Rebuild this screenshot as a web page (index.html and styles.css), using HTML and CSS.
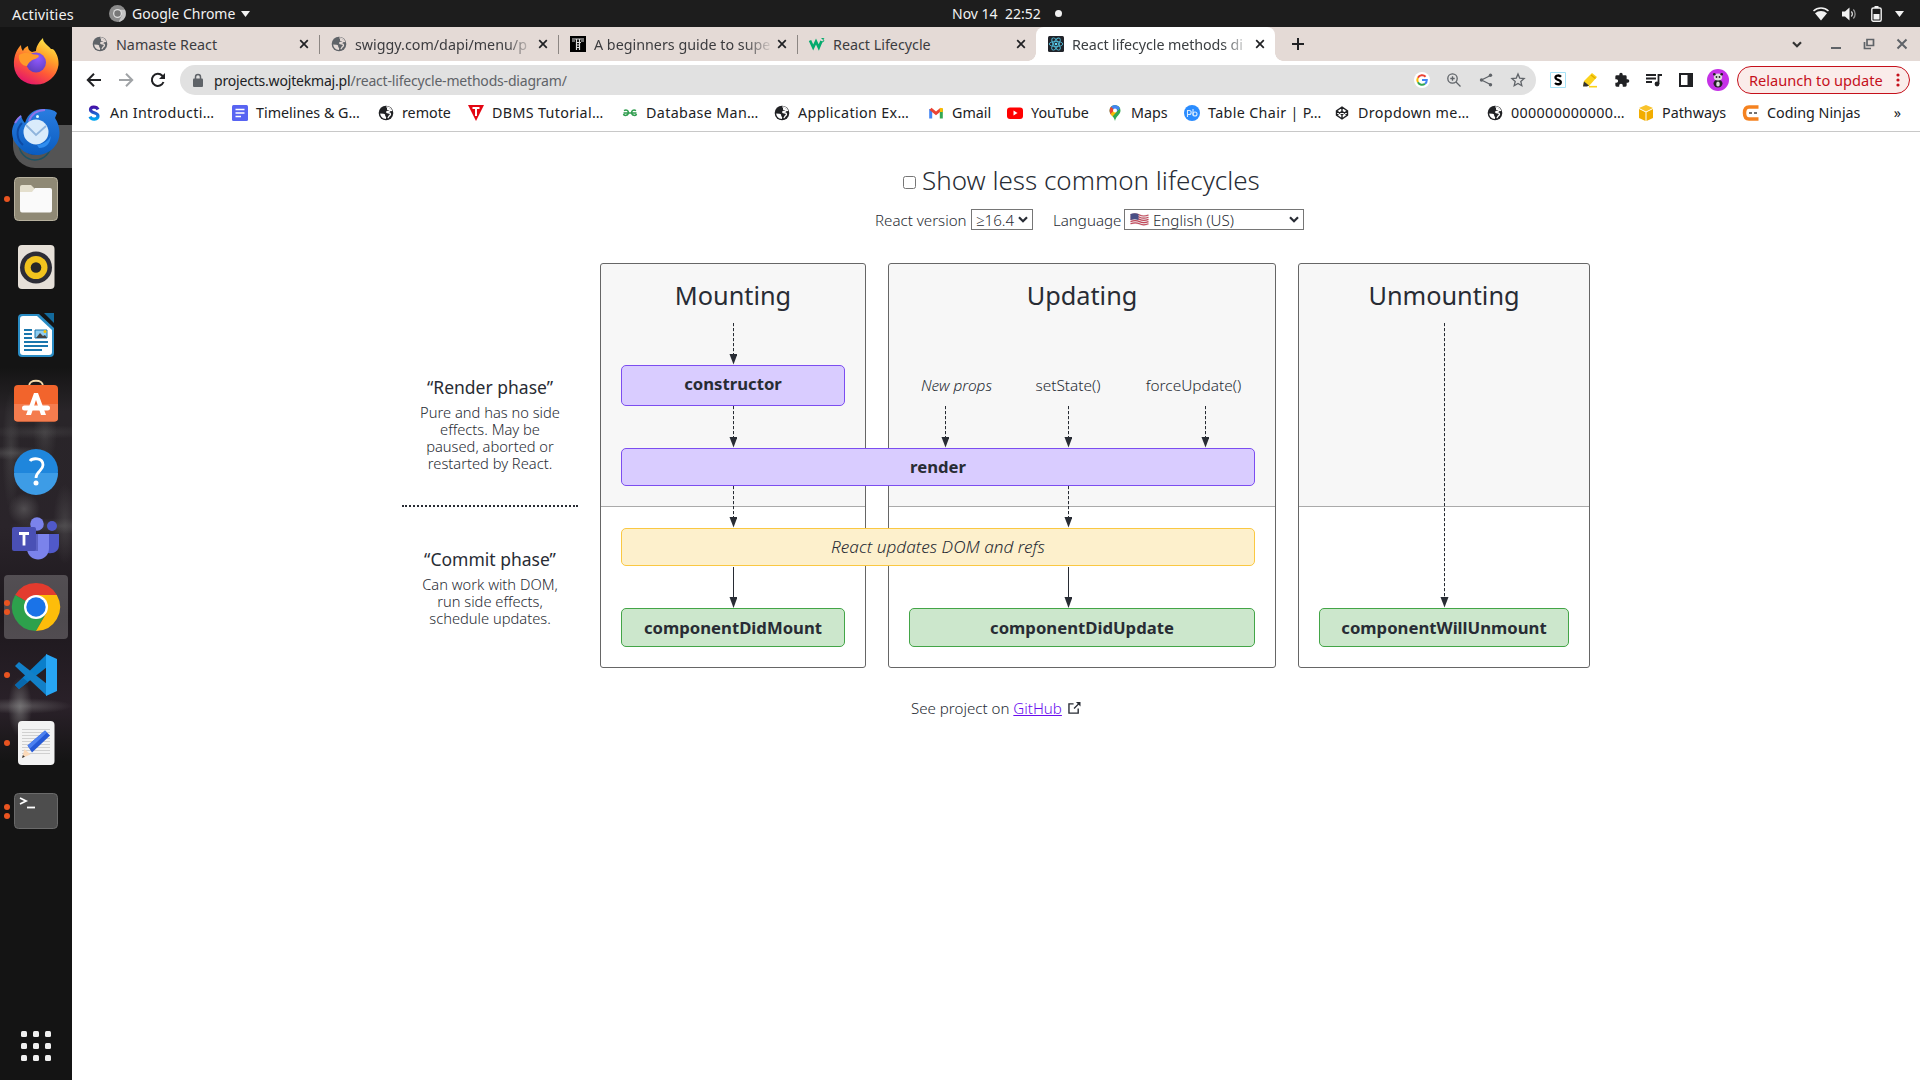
FILE: index.html
```html
<!DOCTYPE html>
<html lang="en">
<head>
<meta charset="utf-8">
<title>React lifecycle methods diagram</title>
<link rel="stylesheet" href="styles.css">
</head>
<body>
<svg class="defs" width="0" height="0">
  <defs>
    <linearGradient id="fox" x1=".8" y1="0" x2=".3" y2="1"><stop offset="0" stop-color="#fff44f"/><stop offset=".35" stop-color="#ffa52a"/><stop offset=".65" stop-color="#ff5a36"/><stop offset="1" stop-color="#e3156c"/></linearGradient>
    <radialGradient id="foxglobe" cx=".6" cy=".3" r=".8"><stop offset="0" stop-color="#9059ff"/><stop offset="1" stop-color="#5b3bb5"/></radialGradient>
    <linearGradient id="bird" x1="0" y1="0" x2="0" y2="1"><stop offset="0" stop-color="#2a7de0"/><stop offset="1" stop-color="#0a5cc0"/></linearGradient>
    <linearGradient id="sgrad" x1="0" y1="0" x2="0" y2="1"><stop offset="0" stop-color="#4312a8"/><stop offset="1" stop-color="#00a5f0"/></linearGradient>
    <symbol id="globe" viewBox="0 0 16 16"><circle cx="8" cy="8" r="7.300" fill="currentColor"/><path d="M2.200 8.500l3.300.200c1.300.1 1.700.8 1.700 1.600v.900c.9.2 1 .8.9 1.600l-.200 1.200C4.700 13.900 2.300 11.500 2.200 8.500z" fill="var(--land,#fff)"/><path d="M8.300 1.900c2.500.1 4.300 1.500 5.200 3.500l-1.700.200c-.5.900-1.300 1-2.300.8-.8 0-1 .9-.3 1.200 1.200.3 3 .1 3.300 1.400.2 1.200-.8 1.500-1.500 2.200-.300.7-.4 1.300-1.300 1.700" fill="none" stroke="var(--land,#fff)" stroke-width="1.300"/><path d="M9 2.400c2 .3 3.200 1.200 4 2.500l-2 .7-2-.8z" fill="var(--land,#fff)"/></symbol>
    <symbol id="x" viewBox="0 0 10 10"><path d="M1.200 1.200l7.600 7.600M8.800 1.200L1.200 8.800" stroke="#202124" stroke-width="1.700" fill="none"/></symbol>
    <symbol id="chev" viewBox="0 0 10 7"><path d="M1 1.200l4 4 4-4" stroke="currentColor" stroke-width="2.200" fill="none"/></symbol>
    <symbol id="arrow" viewBox="0 0 8 42"><path d="M4.500 0v32" stroke="#282c34" stroke-dasharray="3.200 1.800"/><path d="M.5 31h8l-4 10.500z" fill="#282c34"/></symbol>
    <symbol id="arrow-solid" viewBox="0 0 8 42"><path d="M4.500 1v32" stroke="#282c34"/><path d="M.5 31h8l-4 11z" fill="#282c34"/></symbol>
  </defs>
</svg>

<header class="topbar">
  <span class="activities">Activities</span>
  <span class="app-menu">
    <svg width="17" height="17" viewBox="0 0 16 16"><circle cx="8" cy="8" r="8" fill="#8b8b8b"/><path d="M8 4.500h7a8 8 0 0 1-6 11.400l3-6z" fill="#c4c4c4"/><circle cx="8" cy="8" r="4.200" fill="#ddd"/><circle cx="8" cy="8" r="3" fill="#777"/></svg>
    Google Chrome
    <svg width="9" height="6" viewBox="0 0 9 6"><path d="M0 0h9L4.500 6z" fill="#f2f2f2"/></svg>
  </span>
  <span class="clock">Nov 14&nbsp; 22:52<i class="clock-dot"></i></span>
  <span class="tray">
    <svg width="16" height="14" viewBox="0 0 16 14"><path d="M.5 4a11 11 0 0 1 15 0" fill="none" stroke="#f2f2f2" stroke-width="1.500"/><path d="M2 6.200a9 9 0 0 1 12 0L8 13.500z" fill="#f2f2f2"/></svg>
    <svg width="16" height="14" viewBox="0 0 16 14"><path d="M0 4.500h3L7.500.500v13L3 9.500H0z" fill="#f2f2f2"/><path d="M9.300 4.500a3.500 3.500 0 0 1 0 5" fill="none" stroke="#ddd" stroke-width="1.300"/><path d="M11.300 2.500a6.500 6.500 0 0 1 0 9" fill="none" stroke="#999" stroke-width="1.300"/></svg>
    <svg width="11" height="16" viewBox="0 0 11 16"><path d="M3.500 0h4v2h-4z" fill="#f2f2f2"/><rect x=".8" y="2" width="9.400" height="13.200" rx="1.500" fill="none" stroke="#f2f2f2" stroke-width="1.400"/><path d="M2.500 8h6v5.500h-6z" fill="#f2f2f2"/></svg>
    <svg width="9" height="6" viewBox="0 0 9 6"><path d="M0 0h9L4.500 6z" fill="#f2f2f2"/></svg>
  </span>
</header>

<div class="desktop">
<nav class="dock">
  <a class="slot"><svg viewBox="0 0 48 48"><path d="M2 27C1 16 6 9 9 6c0 3 1 5 2 6 1-3 3-4 5-5 0 3 1 5 4 6l4-1C24 7 28 2 31-1c0 5 4 6 8 11 2 0 2 0 3 1 3 4 5 9 4.500 15A22.500 22.500 0 0 1 24 45.500C12 45.500 3 38 2 27z" fill="url(#fox)"/><circle cx="24" cy="23.500" r="10" fill="url(#foxglobe)"/><path d="M7 16c5-3 9-2 13-1 3 1 6 0 7 2-1 3-6 3-8 5-2 1-3 3-4 5-5 0-9-5-8-11z" fill="#ff9a2a"/></svg></a>
  <a class="slot slot-mail"><svg viewBox="0 0 48 48"><circle cx="23" cy="38" r="16" fill="none" stroke="#1c5263" stroke-width="1.500" transform="translate(0 -1)"/><path d="M16 46c4 2 9 2 13 0v-4H16z" fill="#111"/><g transform="translate(0 3)"><path d="M0 21C1 13 5 9 9 5c1 4 2 6 4 8C16 3 23-1 31-1c8 0 11 1 14 4l-2 5c6 9 6 21 0 28-8 11-25 12-34 3C1 32 0 27 0 21z" fill="url(#bird)"/><path d="M17 11C20 3 26 0 33 0M3 13c2-3 3-5 6-7" fill="none" stroke="#8f74ea" stroke-width="2"/><path d="M10 13c-7 7-5 17 1 22" stroke="#0e4ba5" stroke-width="2" fill="none"/><circle cx="24" cy="22" r="12.500" fill="#d9ebfb"/><path d="M14 15l10 10 10-9" fill="none" stroke="#8fb4dc" stroke-width="1.800"/><circle cx="25.500" cy="6.500" r="1.500" fill="#dff"/><path d="M25 35c7-1 11-4 14-9-1 8-5 12-12 12z" fill="#2f8df0"/></g></svg></a>
  <a class="slot"><i class="run"></i><svg viewBox="0 0 48 48"><rect x="2.500" y="2.500" width="43" height="43" rx="4" fill="#8f8975" stroke="#b7b19e"/><path d="M8 12q0-2 2-2h9l4 4v8H8z" fill="#e4dfcd"/><path d="M8 17h12l3-4h15q2 0 2 2v20q0 2.500-2 2.500H10q-2 0-2-2.500z" fill="#fafafa"/></svg></a>
  <a class="slot"><svg viewBox="0 0 48 48"><rect x="6" y="2" width="36.500" height="44" rx="4" fill="#e6e0d8"/><circle cx="24" cy="24.500" r="16" fill="#2d2d36"/><circle cx="24" cy="24.500" r="11.500" fill="#f2c41e"/><circle cx="24" cy="24.500" r="5.300" fill="#282828"/></svg></a>
  <a class="slot"><svg viewBox="0 0 48 48"><path d="M10 3h17l15 14v25q0 4-4 4H10q-4 0-4-4V7q0-4 4-4z" fill="#2a8cc4"/><path d="M11 5h14L40 19v22q0 3-3 3H11q-3 0-3-3V8q0-3 3-3z" fill="#fff"/><path d="M32 2h10v10z" fill="#136a9c"/><path d="M12 19h8M12 23h8M12 27h8M12 31h24M12 35h24M12 39h18" stroke="#1a76ad" stroke-width="1.800"/><path d="M23 19h12v8H23z" fill="#8ecdf0" stroke="#1a76ad"/><path d="M24 27l4-5 3 3 2-1 2 3z" fill="#444"/><circle cx="33" cy="20.500" r="1.500" fill="#f8c000"/></svg></a>
  <a class="slot"><svg viewBox="0 0 48 48"><path d="M17 7c0-7 14-7 14 0" fill="none" stroke="#f3d9aa" stroke-width="2"/><rect x="2" y="6" width="44" height="36.500" rx="4" fill="#f2642c"/><path d="M2 25h44v14q0 3.500-3.500 3.500h-37Q2 42.500 2 39z" fill="#f47c4e"/><path d="M14 36l8-22h4l8 22h-5l-5-15-5 15z" fill="#fff"/><rect x="10" y="26.500" width="28" height="5" rx="2.500" fill="#fff"/></svg></a>
  <a class="slot"><svg viewBox="0 0 48 48"><circle cx="24" cy="24" r="22" fill="#1f86dc"/><path d="M2 26a22 22 0 0 0 44 0z" fill="#3d9ce6"/><path d="M18 14c2-3 13-4 13 4 0 6-7 6-7 13" fill="none" stroke="#fff" stroke-width="2.800"/><circle cx="24" cy="36" r="2.500" fill="#fff"/></svg></a>
  <a class="slot"><svg viewBox="0 0 48 48"><g transform="translate(0 1)"><circle cx="40" cy="10" r="5" fill="#5059c9"/><path d="M34 18h13v11c0 6-5 9-11 8z" fill="#5059c9"/><circle cx="25" cy="8" r="6.800" fill="#7b83eb"/><path d="M15 18h22v14c0 15-21 15-22 1z" fill="#7b83eb"/><path d="M12 18h14v17H13z" fill="#5c62c4"/><rect y="11" width="24" height="24" rx="2" fill="#4a50b5"/><path d="M7 17.500h10M12 17v12.500" stroke="#fff" stroke-width="2.800"/></g></svg></a>
  <a class="slot slot-active"><i class="run"></i><i class="run"></i><svg viewBox="0 0 48 48"><path d="M24 24L3.200 12a24 24 0 0 1 41.600 0z" fill="#e33b2e"/><path d="M24 24L3.200 12A24 24 0 0 0 24 48l10-18z" fill="#2da14c"/><path d="M24 12h20.800A24 24 0 0 1 24 48l10.400-18z" fill="#fdbd0a"/><circle cx="24" cy="24" r="12" fill="#fff"/><circle cx="24" cy="24" r="9.700" fill="#1a73e8"/></svg></a>
  <a class="slot"><i class="run"></i><svg viewBox="0 0 48 48"><path d="M3 34l4 4 28-22V3z" fill="#0a7fcb"/><path d="M3 15l4-4 28 22v12z" fill="#1280c8"/><path d="M3 34l4 4 9-7-5-4z" fill="#0868ad"/><path d="M34 3l11 5v32l-11 5z" fill="#27a5f3"/></svg></a>
  <a class="slot"><i class="run"></i><svg viewBox="0 0 48 48"><rect x="6" y="2" width="36.500" height="44" rx="4" fill="#f3f3f3"/><path d="M10 10.500h28M10 13.500h28M10 16.500h28M10 19.500h28M10 22.500h28M10 25.500h28M10 28.500h28M10 31.500h28M10 34.500h28" stroke="#d0d0d0"/><path d="M10 39l2.500-9 6 5.500z" fill="#fbd9b8"/><path d="M15.500 26.500L33 11.500l5 5L20 33.500z" fill="#2559d6"/><path d="M15.500 26.500L33 11.500l2 2-17 16z" fill="#4c80f0"/><path d="M10 39l.9-3 2 1.800z" fill="#333"/></svg></a>
  <a class="slot"><i class="run"></i><i class="run"></i><svg viewBox="0 0 48 48"><rect x="2.500" y="6.500" width="43" height="35" rx="4" fill="#4d4d4d" stroke="#6a6a6a"/><path d="M8 11l6 3-6 3" fill="none" stroke="#fff" stroke-width="1.800"/><path d="M15 20.500h8" stroke="#fff" stroke-width="1.800"/></svg></a>
  <a class="slot slot-apps"><svg viewBox="0 0 48 48" fill="#f0f0f0"><rect x="9" y="9" width="6" height="6" rx="1.500"/><rect x="21" y="9" width="6" height="6" rx="1.500"/><rect x="33" y="9" width="6" height="6" rx="1.500"/><rect x="9" y="21" width="6" height="6" rx="1.500"/><rect x="21" y="21" width="6" height="6" rx="1.500"/><rect x="33" y="21" width="6" height="6" rx="1.500"/><rect x="9" y="33" width="6" height="6" rx="1.500"/><rect x="21" y="33" width="6" height="6" rx="1.500"/><rect x="33" y="33" width="6" height="6" rx="1.500"/></svg></a>
</nav>

<div class="browser">
  <div class="tabs">
    <div class="tab"><svg class="fav" viewBox="0 0 16 16"><use href="#globe"/></svg><span class="tab-title">Namaste React</span><svg class="tab-x"><use href="#x"/></svg></div>
    <div class="tab"><svg class="fav" viewBox="0 0 16 16"><use href="#globe"/></svg><span class="tab-title fade">swiggy.com/dapi/menu/p</span><svg class="tab-x"><use href="#x"/></svg></div>
    <div class="tab"><svg class="fav" viewBox="0 0 16 16"><path d="M0 0h16v16H0z"/><path d="M2 3h12M2 5h3M11 5h3M6.500 3v11M9.500 3v11M6 6.500h5M6 9h4M6 11.500h4" stroke="#ddd" stroke-width="1.200"/></svg><span class="tab-title fade">A beginners guide to supe</span><svg class="tab-x"><use href="#x"/></svg></div>
    <div class="tab"><svg class="fav" viewBox="0 0 16 16"><path d="M1 4.500l3.200 7 2.800-6 2.800 6L12.500 5" fill="none" stroke="#04aa6d" stroke-width="2.600"/><path d="M12.500 2.500h2.300l-1 1.500c1.500 0 1.500 2-.8 1.800" fill="none" stroke="#04aa6d"/></svg><span class="tab-title">React Lifecycle</span><svg class="tab-x"><use href="#x"/></svg></div>
    <div class="tab tab-current"><svg class="fav" viewBox="0 0 16 16"><rect width="16" height="16" rx="1.500" fill="#20232a"/><g fill="none" stroke="#4fb8d4" stroke-width=".9"><ellipse cx="8" cy="8" rx="6.800" ry="2.600"/><ellipse cx="8" cy="8" rx="6.800" ry="2.600" transform="rotate(60 8 8)"/><ellipse cx="8" cy="8" rx="6.800" ry="2.600" transform="rotate(120 8 8)"/></g><circle cx="8" cy="8" r="1.300" fill="#61dafb"/></svg><span class="tab-title fade">React lifecycle methods di</span><svg class="tab-x"><use href="#x"/></svg></div>
    <svg class="new-tab" viewBox="0 0 12 12"><path d="M6 0v12M0 6h12" stroke="#202124" stroke-width="2"/></svg>
    <div class="win">
      <svg width="10" height="7" color="#333"><use href="#chev"/></svg>
      <svg width="12" height="12" viewBox="0 0 12 12"><path d="M1 10h10" stroke="#5f6368" stroke-width="2"/></svg>
      <svg width="12" height="12" viewBox="0 0 12 12"><path d="M4 1.500h6.500v6H4zM1.500 4v6.500H8" fill="none" stroke="#5f6368" stroke-width="1.700"/></svg>
      <svg width="12" height="12" viewBox="0 0 12 12"><path d="M1.500 1.500l9 9M10.500 1.500l-9 9" stroke="#5f6368" stroke-width="2"/></svg>
    </div>
  </div>

  <div class="toolbar">
    <svg class="nav-ic" viewBox="0 0 16 16"><path d="M15 8H2M8 1.800L1.800 8 8 14.200" fill="none" stroke="#202124" stroke-width="2"/></svg>
    <svg class="nav-ic" viewBox="0 0 16 16"><path d="M1 8h13M8 1.800L14.200 8 8 14.200" fill="none" stroke="#a0a3a6" stroke-width="2"/></svg>
    <svg class="nav-ic" viewBox="0 0 16 16"><path d="M13.500 10A6 6 0 1 1 12.300 3.800L14 5.500" fill="none" stroke="#202124" stroke-width="2"/><path d="M15 1v6H9z" fill="#202124"/></svg>
    <div class="omnibox">
      <svg width="10" height="13" viewBox="0 0 10 13"><rect y="4.500" width="10" height="8.500" rx="1" fill="#5f6368"/><path d="M2.500 5V3a2.500 2.500 0 0 1 5 0v2" fill="none" stroke="#5f6368" stroke-width="1.500"/></svg>
      <span class="url"><b>projects.wojtekmaj.pl</b>/react-lifecycle-methods-diagram/</span>
      <svg class="omni-ic" viewBox="0 0 16 16"><circle cx="8" cy="8" r="8" fill="#fff"/><g fill="none" stroke-width="2"><path d="M11.600 4.700A4.800 4.800 0 0 0 3.900 5.700" stroke="#ea4335"/><path d="M3.900 5.700a4.800 4.800 0 0 0 0 4.600" stroke="#fbbc05"/><path d="M3.900 10.300A4.800 4.800 0 0 0 11 11.800" stroke="#34a853"/><path d="M11 11.800A4.800 4.800 0 0 0 12.800 8H8" stroke="#4285f4"/></g></svg>
      <svg class="omni-ic" viewBox="0 0 16 16"><circle cx="6.500" cy="6.500" r="4.700" fill="none" stroke="#5f6368" stroke-width="1.300"/><path d="M10 10l4.500 4.500M4.300 6.500h4.400M6.500 4.300v4.400" stroke="#5f6368" stroke-width="1.300"/></svg>
      <svg class="omni-ic" viewBox="0 0 16 16"><path d="M12.500 3.500L3.500 8l9 4.500" fill="none" stroke="#5f6368" stroke-width="1.300"/><g fill="#5f6368"><circle cx="12.500" cy="3.300" r="1.700"/><circle cx="3.500" cy="8" r="1.700"/><circle cx="12.500" cy="12.700" r="1.700"/></g></svg>
      <svg class="omni-ic" viewBox="0 0 16 16"><path d="M8 2l1.700 4.100 4.400.400-3.300 2.900 1 4.300L8 11.400l-3.800 2.300 1-4.300L1.900 6.500l4.400-.4z" fill="none" stroke="#5f6368" stroke-width="1.300"/></svg>
    </div>
    <svg class="ext" viewBox="0 0 16 16"><path d="M.5.500h15v15H.5z" fill="#fff" stroke="#a5e2f8"/><path d="M11 4.700C9.500 3 5.500 3 5.500 5.500c0 3 5.300 1.800 5.300 4.700 0 2.600-4 2.600-5.800.800" fill="none" stroke="#000" stroke-width="2.300"/></svg>
    <svg class="ext" viewBox="0 0 16 16"><path d="M1 14l1-5 8-8 5 4-8 9z" fill="#fbd21b"/><path d="M1 14.500l1-5 5 4-2 1z" fill="#333"/><path d="M9 3l4.500 3.500" stroke="#e0ad00" stroke-width="1.500"/><path d="M7 14.700h8" stroke="#fbd21b" stroke-width="1.600"/></svg>
    <svg class="ext" viewBox="0 0 24 24"><path d="M20.500 11H19V7a2 2 0 0 0-2-2h-4V3.500a2.500 2.500 0 0 0-5 0V5H4a2 2 0 0 0-2 2v3.800h1.500a2.700 2.700 0 0 1 0 5.400H2V20a2 2 0 0 0 2 2h3.800v-1.500a2.700 2.700 0 0 1 5.400 0V22H17a2 2 0 0 0 2-2v-4h1.500a2.500 2.500 0 0 0 0-5z" fill="#202124"/></svg>
    <svg class="ext" viewBox="0 0 16 16"><path d="M0 3h10M0 6.500h10M0 10h6M12.500 12V3H16" fill="none" stroke="#202124" stroke-width="1.800"/><circle cx="11" cy="12" r="2.400" fill="#202124"/></svg>
    <svg class="ext" viewBox="0 0 16 16"><path d="M2 2h12v12H2z" fill="none" stroke="#202124" stroke-width="2"/><path d="M9.500 2H14v12H9.500z" fill="#202124"/></svg>
    <svg class="avatar" viewBox="0 0 22 22"><circle cx="11" cy="11" r="11" fill="#c531e6"/><ellipse cx="11" cy="14.500" rx="4.500" ry="4" fill="#222"/><ellipse cx="11" cy="8" rx="4.200" ry="3.600" fill="#ddd"/><circle cx="7.300" cy="5.200" r="1.300" fill="#222"/><circle cx="14.700" cy="5.200" r="1.300" fill="#222"/><circle cx="9.500" cy="8" r=".9" fill="#222"/><circle cx="12.500" cy="8" r=".9" fill="#222"/><ellipse cx="11" cy="15" rx="1.800" ry="2.500" fill="#ddd"/></svg>
    <div class="relaunch"><span>Relaunch to update</span><svg width="4" height="14" viewBox="0 0 4 14" fill="#c5101b"><circle cx="2" cy="2" r="1.600"/><circle cx="2" cy="7" r="1.600"/><circle cx="2" cy="12" r="1.600"/></svg></div>
  </div>

  <div class="bookmarks">
    <span class="bm bm-x"><svg viewBox="0 0 16 16"><path d="M12 4.500C10.500 1.200 4.500 1.300 4.500 4.800 4.500 8.500 12 7 12 11c0 3.800-6.500 4.200-8 .600" fill="none" stroke="url(#sgrad)" stroke-width="3.200"/></svg><span>An Introducti…</span></span>
    <span class="bm"><svg viewBox="0 0 16 16"><rect width="16" height="16" rx="1.500" fill="#5864f2"/><path d="M3.500 4.500h9M3.500 8h9M3.500 11.500h5.500" stroke="#fff" stroke-width="1.600"/></svg><span>Timelines &amp; G…</span></span>
    <span class="bm"><svg viewBox="0 0 16 16"><use href="#globe"/></svg><span>remote</span></span>
    <span class="bm bm-x"><svg viewBox="0 0 16 16"><path d="M0 0h16L8 16z" fill="#e30613"/><path d="M4.500 3h7M8 3v8" stroke="#fff" stroke-width="2"/></svg><span>DBMS Tutorial…</span></span>
    <span class="bm bm-x"><svg viewBox="0 0 16 16" fill="none" stroke="#2f9d4e" stroke-width="1.500"><path d="M1.500 8h13M2 5.700c2.500-1.500 4.700 0 4.300 2.300 0 2.500-4.300 3.300-4.800 1M14 5.700c-2.500-1.500-4.700 0-4.300 2.300 0 2.500 4.300 3.300 4.800 1"/></svg><span>Database Man…</span></span>
    <span class="bm bm-x"><svg viewBox="0 0 16 16"><use href="#globe"/></svg><span>Application Ex…</span></span>
    <span class="bm"><svg viewBox="0 0 16 16" fill="none" stroke-width="3"><path d="M2.700 13.500V4" stroke="#4285f4"/><path d="M13.300 13.500V4" stroke="#34a853"/><path d="M2.500 3.800L8 8.300l5.500-4.500" stroke="#ea4335"/><path d="M13.300 3v4" stroke="#fbbc04"/></svg><span>Gmail</span></span>
    <span class="bm"><svg viewBox="0 0 16 16"><rect y="2.500" width="16" height="11.500" rx="3" fill="#f00"/><path d="M6.500 5.500v5l4-2.500z" fill="#fff"/></svg><span>YouTube</span></span>
    <span class="bm"><svg viewBox="0 0 16 16"><path d="M8 0a5.500 5.500 0 0 1 5.500 5.500C13.500 9.500 9 11 8 16 7 11 2.500 9.500 2.500 5.500A5.500 5.500 0 0 1 8 0z" fill="#34a853"/><path d="M4 1.800A5.500 5.500 0 0 1 13 3.300L8 5.500z" fill="#4285f4"/><path d="M4 1.800l4 3.700-4.500 4C2 6 2.500 3.500 4 1.800z" fill="#ea4335"/><path d="M8 7l2-1 2.500-2.500" fill="none" stroke="#4285f4"/><path d="M3.500 9l4-4 2 2-4 4.500z" fill="#fbbc04"/><circle cx="8" cy="5.500" r="2" fill="#fff"/></svg><span>Maps</span></span>
    <span class="bm bm-x"><svg viewBox="0 0 16 16"><circle cx="8" cy="8" r="8" fill="#2a8cff"/><g fill="none" stroke="#d9ecff" stroke-width="1.100"><path d="M3.500 12V5.500h1.700a2 2 0 0 1 0 4H3.500M9 4v6.500"/><circle cx="11" cy="9" r="2"/></g></svg><span>Table Chair | P…</span></span>
    <span class="bm bm-x"><svg viewBox="0 0 16 16" fill="none" stroke="#202124" stroke-width="1.400"><path d="M8 2l5.500 3.800v4.400L8 14l-5.500-3.800V5.800zM2.500 5.800L8 9.700l5.500-3.900M2.500 10.200L8 6.300l5.500 3.900M8 2v4.300M8 9.700V14"/></svg><span>Dropdown me…</span></span>
    <span class="bm bm-x"><svg viewBox="0 0 16 16"><use href="#globe"/></svg><span>000000000000…</span></span>
    <span class="bm"><svg viewBox="0 0 16 16"><path d="M8 0l7 3-7 3.500L1 3z" fill="#f9c32b"/><path d="M1 4l6.500 3.200V16L1 13zM15 4L8.500 7.200V16l6.500-3z" fill="#f2ad00"/></svg><span>Pathways</span></span>
    <span class="bm"><svg viewBox="0 0 16 16"><path d="M15.500 2H6Q1.500 2 1.500 8T6 14h9.500" fill="none" stroke="#f58220" stroke-width="3.500"/><path d="M6 8h3M11 8h3" stroke="#444" stroke-width="1.500"/></svg><span>Coding Ninjas</span></span>
    <span class="more">»</span>
  </div>

  <main class="page">
    <div class="toggle"><i class="checkbox"></i><span>Show less common lifecycles</span></div>
    <div class="options">
      <span>React version</span>
      <span class="select"><span>≥16.4</span><svg width="10" height="7"><use href="#chev"/></svg></span>
      <span class="lang-label">Language</span>
      <span class="select select-lang"><svg class="flag" viewBox="0 0 18 13"><path d="M0 1q5-2 9 0t9 0v11q-5 2-9 0t-9 0z" fill="#eee"/><path d="M0 2q5-2 9 0t9 0M0 4.200q5-2 9 0t9 0M0 6.400q5-2 9 0t9 0M0 8.600q5-2 9 0t9 0M0 10.800q5-2 9 0t9 0" fill="none" stroke="#c2485a" stroke-width="1.200"/><path d="M0 1q4-1.500 8 0v6q-4-1.500-8 0z" fill="#4a4f86"/></svg><span>English (US)</span><svg width="10" height="7"><use href="#chev"/></svg></span>
    </div>

    <div class="diagram">
      <div class="phase phase-render"><h3>“Render phase”</h3><p>Pure and has no side<br>effects. May be<br>paused, aborted or<br>restarted by React.</p></div>
      <div class="phase phase-commit"><h3>“Commit phase”</h3><p>Can work with DOM,<br>run side effects,<br>schedule updates.</p></div>

      <div class="panel panel-m"></div>
      <div class="panel panel-u"></div>
      <div class="panel panel-w"></div>
      <h2 class="title-m">Mounting</h2>
      <h2 class="title-u">Updating</h2>
      <h2 class="title-w">Unmounting</h2>

      <svg class="arrow a-m1"><use href="#arrow"/></svg>
      <div class="box purple b-ctor">constructor</div>
      <svg class="arrow a-m2"><use href="#arrow"/></svg>
      <div class="triggers">
        <span class="trigger"><em>New props</em><svg class="arrow"><use href="#arrow"/></svg></span>
        <span class="trigger"><span>setState()</span><svg class="arrow"><use href="#arrow"/></svg></span>
        <span class="trigger"><span>forceUpdate()</span><svg class="arrow"><use href="#arrow"/></svg></span>
      </div>
      <div class="box purple b-render">render</div>
      <svg class="arrow a-m3"><use href="#arrow"/></svg>
      <svg class="arrow a-u3"><use href="#arrow"/></svg>
      <div class="box yellow b-dom">React updates DOM and refs</div>
      <svg class="arrow a-m4"><use href="#arrow-solid"/></svg>
      <svg class="arrow a-u4"><use href="#arrow-solid"/></svg>
      <svg class="arrow a-w" viewBox="0 0 8 285"><path d="M4.500 0v275" stroke="#282c34" stroke-dasharray="3.200 1.800"/><path d="M.5 274h8l-4 10.500z" fill="#282c34"/></svg>
      <div class="box green b-dm">componentDidMount</div>
      <div class="box green b-du">componentDidUpdate</div>
      <div class="box green b-wu">componentWillUnmount</div>
    </div>

    <footer class="credit"><span>See project on <a>GitHub</a></span><svg width="13" height="12" viewBox="0 0 14 13"><path d="M6 2H1v10h10V7M6.500 7L12 1.500" fill="none" stroke="#282c34" stroke-width="1.500"/><path d="M8.500 0h5v5z" fill="#282c34"/></svg></footer>
  </main>
</div>
</div>
</body>
</html>
```
FILE: styles.css
```css
* { box-sizing: border-box; }
body {
  margin: 0;
  width: 1920px;
  height: 1080px;
  overflow: hidden;
  background: #fff;
  color: #202124;
  font-family: "Noto Sans", "Open Sans", sans-serif;
  font-size: 14px;
  white-space: nowrap;
}
svg { display: block; flex: none; overflow: visible; }
.defs { position: absolute; }

/* system bar */
.topbar {
  display: grid;
  grid-template-columns: 97px 843px 1fr auto;
  align-items: center;
  height: 27px;
  padding: 0 16px 0 12px;
  background: #1d1d1d;
  color: #f2f2f2;
  font-size: 14px;
}
.activities { font-size: 14.500px; letter-spacing: .15px; }
.app-menu, .clock, .tray { display: flex; align-items: center; }
.app-menu { gap: 6px; }
.clock-dot { width: 7px; height: 7px; margin-left: 14px; border-radius: 50%; background: #f2f2f2; }
.tray { gap: 13px; }

.desktop { display: flex; height: 1053px; }

/* dock */
.dock {
  display: flex;
  flex-direction: column;
  width: 72px;
  padding-top: 2px;
  background:
    radial-gradient(ellipse 12px 30px at 45px 407px, #6665, #0000),
    radial-gradient(ellipse 60px 7px at 40px 405px, #6664, #0000),
    radial-gradient(ellipse 40px 7px at 12px 426px, #6667, #0000),
    radial-gradient(ellipse 9px 60px at 11px 424px, #6665, #0000),
    radial-gradient(circle 16px at 24px 482px, #8886, #0000),
    radial-gradient(ellipse 12px 40px at 65px 497px, #6666, #0000),
    radial-gradient(ellipse 50px 8px at 60px 499px, #6666, #0000),
    radial-gradient(ellipse 12px 30px at 20px 680px, #8889, #0000),
    radial-gradient(ellipse 50px 8px at 22px 679px, #8887, #0000),
    linear-gradient(#141414 340px, #292529 385px, #2a242a 500px, #1d181d 590px, #2a2129 680px, #141414 735px);
}
.slot { position: relative; display: flex; align-items: center; justify-content: center; height: 68px; flex: none; }
.slot > svg { width: 48px; height: 48px; position: relative; }
.slot .run { position: absolute; left: 4px; top: 31px; width: 6px; height: 6px; border-radius: 50%; background: #e95420; }
.slot .run + .run { top: 35.500px; }
.slot .run:has(+ .run) { top: 26.500px; }
.slot-active::before { content: ""; position: absolute; left: 4px; top: 2px; width: 64px; height: 64px; border-radius: 4px; background: #ffffff38; }
.slot-mail::before { content: ""; position: absolute; left: 13px; right: 0; top: 28px; height: 43px; border-radius: 4px 0 0 22px; background: #545454; }
.slot-apps { margin-top: auto; }

/* browser */
.browser { flex: 1; min-width: 0; }
.tabs { display: flex; align-items: center; height: 34px; padding-left: 8px; background: #e4dad6; }
.tab {
  position: relative;
  display: flex;
  align-items: center;
  width: 239px;
  height: 34px;
  padding: 0 10px 0 12px;
  font-size: 14.300px;
  color: #3c3c3f;
}
.tab::after { content: ""; position: absolute; right: -1px; top: 8px; width: 1px; height: 19px; background: #8c8683; }
.tab:nth-child(n+4)::after { display: none; }
.fav { width: 16px; height: 16px; color: #5f6368; --land: #e4dad6; }
.tab-title { flex: 1; margin-left: 8px; margin-right: 4px; }
.fade { -webkit-mask-image: linear-gradient(90deg, #000 84%, #0002 98%); mask-image: linear-gradient(90deg, #000 84%, #0002 98%); }
.tab-x { width: 10px; height: 10px; }
.tab-current { background: #fff; border-radius: 8px 8px 0 0; color: #3c4043; }
.tab-current::before {
  content: "";
  position: absolute;
  left: -8px;
  right: -8px;
  bottom: 0;
  height: 8px;
  background:
    radial-gradient(circle at 0 0, #0000 7.500px, #fff 8px) left / 8px 8px no-repeat,
    radial-gradient(circle at 100% 0, #0000 7.500px, #fff 8px) right / 8px 8px no-repeat;
}
.tab-current .tab-title { letter-spacing: -.1px; }
.new-tab { width: 12px; height: 12px; margin-left: 17px; }
.win { display: flex; align-items: center; gap: 21px; margin-left: auto; margin-right: 12px; }
.win svg:first-child { margin-right: 7px; }

.toolbar { display: flex; align-items: center; height: 38px; padding-left: 14px; padding-right: 10px; }
.nav-ic { width: 16px; height: 16px; margin-right: 16px; }
.omnibox {
  display: flex;
  align-items: center;
  width: 1356px;
  height: 30px;
  margin-left: -2px;
  margin-right: 14px;
  padding: 0 10px 0 13px;
  border-radius: 15px;
  background: #e1e1e1;
}
.url { flex: 1; margin-left: 11px; color: #5f6368; letter-spacing: -.190px; }
.url b { font-weight: 400; color: #202124; }
.omni-ic { width: 16px; height: 16px; margin-left: 16px; }
.ext { width: 16px; height: 16px; margin-right: 16px; }
.avatar { width: 22px; height: 22px; margin-left: -3px; }
.relaunch {
  display: flex;
  align-items: center;
  justify-content: space-between;
  width: 173px;
  height: 28px;
  margin-left: auto;
  padding: 0 9px 0 11px;
  border: 1px solid #c5101b;
  border-radius: 14px;
  background: #faecea;
  color: #c5101b;
  font-size: 14.600px;
}

.bookmarks {
  display: grid;
  grid-template-columns: 146px 146px 90px 154px 152px 154px 79px 100px 77px 150px 153px 151px 105px 1fr auto;
  align-items: center;
  height: 33px;
  padding: 0 19px 5px 14px;
  border-bottom: 1px solid #c8c8c8;
  font-size: 14.300px;
}
.bm { display: flex; align-items: center; gap: 8px; }
.bm svg { width: 16px; height: 16px; }
.bm-x { letter-spacing: .350px; }

/* page */
.page { padding-top: 30px; color: #282c34; font-weight: 300; font-size: 15.100px; }
.toggle { display: flex; align-items: center; height: 36px; margin-left: 831px; gap: 6px; font-size: 26px; }
.checkbox { width: 13px; height: 13px; margin-top: 4px; border: 1px solid #767676; border-radius: 2.500px; }
.options { display: flex; align-items: center; height: 21px; margin: 11px 0 0 803px; }
.options > span:first-child { width: 96px; }
.lang-label { margin-left: 20px; width: 71px; }
.select { display: flex; align-items: center; justify-content: space-between; width: 62px; height: 21px; padding: 0 4px; border: 1px solid #767676; background: #fff; }
.select-lang { width: 180px; }
.select-lang > span { flex: 1; margin-left: 4px; }
.flag { width: 19px; height: 13px; margin-left: 1px; }

.diagram {
  display: grid;
  grid-template-columns: 176px 22px 21px 224px 21px 22px 21px 346px 21px 22px 21px 250px 21px;
  grid-template-rows: 60px 42px 41px 42px 38px 20px 22px 38px 42px 39px 21px;
  margin: 33px 0 0 330px;
}
.panel { grid-row: 1 / 12; border: 1px solid #666; border-radius: 3px; background: linear-gradient(#f7f7f7 242px, #aaa 242px, #aaa 243px, #fff 243px); }
.panel-m { grid-column: 3 / 6; }
.panel-u { grid-column: 7 / 10; }
.panel-w { grid-column: 11 / 14; }
h2, h3, p { margin: 0; font-weight: 400; text-align: center; }
h2 { grid-row: 1; padding-top: 14px; font-size: 25.300px; line-height: 36px; }
.title-m { grid-column: 4; }
.title-u { grid-column: 8; }
.title-w { grid-column: 12; }
.box { display: flex; align-items: center; justify-content: center; border: 1px solid; border-radius: 5px; padding-bottom: 1px; font-size: 16.700px; font-weight: 700; z-index: 1; }
.purple { background: #d9ccff; border-color: #7c4df0; }
.yellow { background: #fdf0cc; border-color: #fac842; font-size: 17.200px; font-weight: 300; font-style: italic; }
.green { background: #cce7cc; border-color: #43a547; }
.b-ctor { grid-area: 3 / 4; padding-bottom: 4px; }
.b-render { grid-area: 5 / 4 / 6 / 9; }
.b-dom { grid-area: 8 / 4 / 9 / 9; }
.b-dm { grid-area: 10 / 4; }
.b-du { grid-area: 10 / 8; }
.b-wu { grid-area: 10 / 12; }
.arrow { width: 8px; height: 42px; justify-self: center; z-index: 2; }
.a-m1 { grid-area: 2 / 4; }
.a-m2 { grid-area: 4 / 4; }
.a-m3 { grid-area: 6 / 4 / 8 / 5; }
.a-m4 { grid-area: 9 / 4; }
.a-u3 { grid-area: 6 / 8 / 8 / 9; margin-right: 28px; }
.a-u4 { grid-area: 9 / 8; margin-right: 28px; }
.a-w { grid-area: 2 / 12 / 10 / 13; height: 285px; }
.triggers { grid-area: 3 / 8 / 5 / 9; display: grid; grid-template-columns: 98px 148px 126px; margin: 0 -13px; justify-items: center; font-size: 15.400px; }
.trigger { display: grid; grid-template-rows: 41px 42px; line-height: 41px; justify-items: center; }
.trigger:first-child em { margin-right: -23px; margin-left: 0; }
.trigger:last-child > span { margin-left: -23px; }

.phase { grid-column: 1; text-align: center; }
.phase-render { grid-row: 3 / 7; padding-top: 8px; border-bottom: 2px dotted #282c34; margin-bottom: -1px; }
.phase-commit { grid-row: 8 / 12; padding-top: 17px; }
h3 { font-size: 17.500px; line-height: 28px; }
.phase p { font-size: 14.700px; font-weight: 300; line-height: 17px; padding-top: 3px; }

.credit { display: flex; align-items: center; gap: 6px; margin: 30px 0 0 839px; line-height: 20px; }
.credit a { color: #6a0dee; text-decoration: underline; }
```
